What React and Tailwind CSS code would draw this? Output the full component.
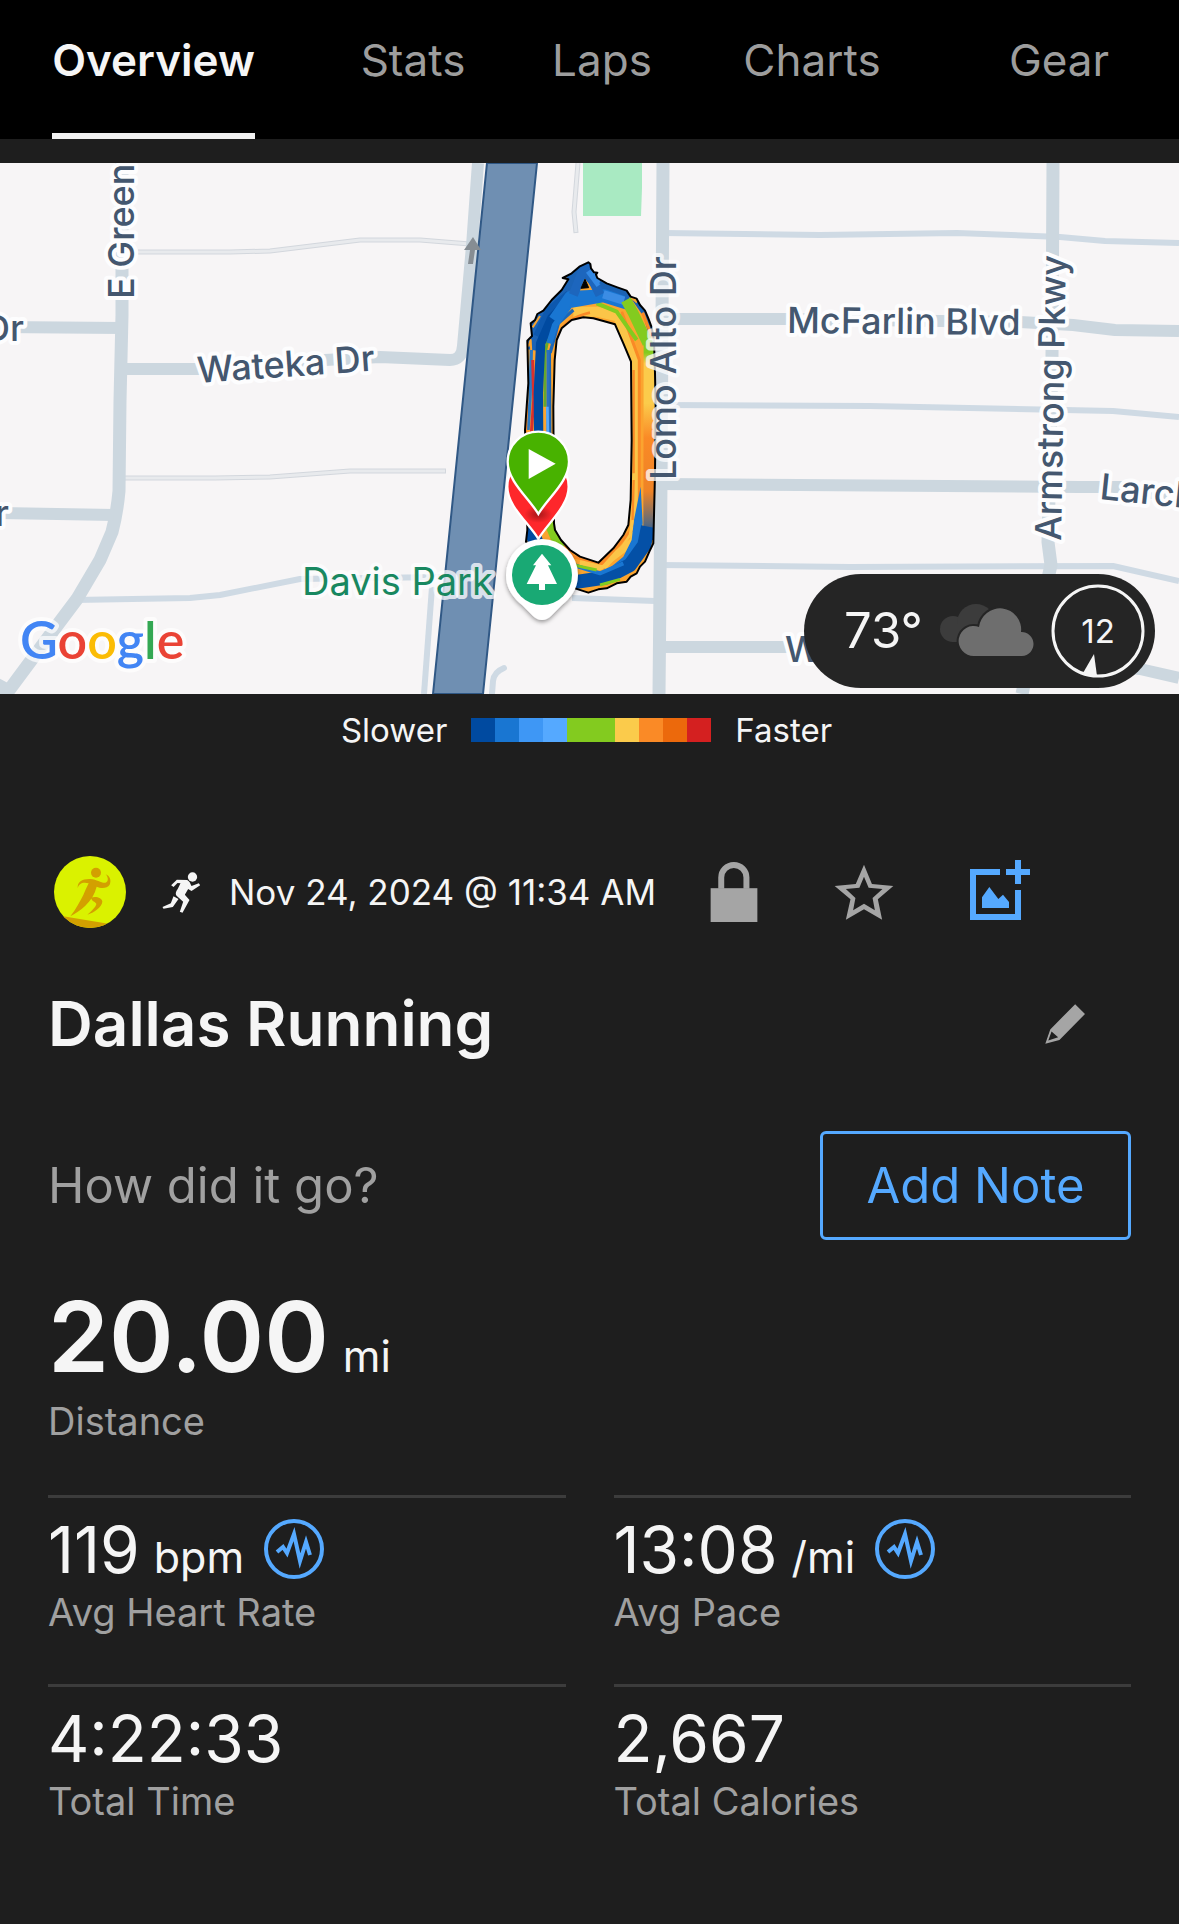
import React from "react";

const tabs = ["Overview", "Stats", "Laps", "Charts", "Gear"];

const paceColors = [
  "bg-[#004aa0]",
  "bg-[#1976d2]",
  "bg-[#3e97f5]",
  "bg-[#55a9ff]",
  "bg-[#83cb1f]",
  "bg-[#83cb1f]",
  "bg-[#fbcb4b]",
  "bg-[#fa8a26]",
  "bg-[#ec690c]",
  "bg-[#d42020]",
];

const stats = [
  { value: "119", unit: "bpm", label: "Avg Heart Rate", chart: true },
  { value: "13:08", unit: "/mi", label: "Avg Pace", chart: true },
  { value: "4:22:33", label: "Total Time" },
  { value: "2,667", label: "Total Calories" },
];

function Tabs() {
  return (
    <nav className="grid grid-cols-[307fr_212fr_166fr_254fr_240fr] bg-black">
      {tabs.map((tab, i) => (
        <button
          key={tab}
          type="button"
          className={
            i === 0
              ? "justify-self-center border-b-[6px] border-[#f2f2f2] pt-9 pb-12 text-[44px] leading-[49px] font-semibold text-[#f5f5f5]"
              : "justify-self-center border-b-[6px] border-transparent pt-9 pb-12 text-[44px] leading-[49px] text-[#9d9d9d]"
          }
        >
          {tab}
        </button>
      ))}
    </nav>
  );
}

function Roads() {
  return (
    <g fill="none" strokeLinejoin="round">
      <g stroke="#d3d7dd" strokeWidth="5">
        <path d="M138 89 L230 89 L270 88 L360 77 L420 77 L470 81" />
        <path d="M125 315 L215 315 L270 314 L350 308 L446 308" />
        <path d="M578 0 L574 49 L576 70" />
      </g>
      <g stroke="#e8eaed" strokeWidth="3">
        <path d="M138 89 L230 89 L270 88 L360 77 L420 77 L470 81" />
        <path d="M125 315 L215 315 L270 314 L350 308 L445 308" />
        <path d="M578 0 L574 49 L576 69" />
      </g>
      <g stroke="#cfdae4" strokeWidth="6">
        <path d="M75 437 L190 435 L220 432 L300 416 L440 414" />
        <path d="M432 424 L424 531" />
        <path d="M663 70 L820 72 L957 70 L1060 74 L1105 78 L1179 80" />
        <path d="M663 242 L870 243 L1113 248 L1179 254" />
        <path d="M659 402 L850 404 L1113 403 L1179 418" />
        <path d="M572 435 L655 438" />
        <path d="M504 505 Q494 509 493 518 L492 531" strokeLinecap="round" />
      </g>
      <g stroke="#ccd7df" strokeWidth="12">
        <path d="M122 0 L122 152 L120 238 L119 328 Q117 350 112 369 L100 397 L77 436 L47 476 L4 534" strokeWidth="13" />
        <path d="M-5 520 L12 529" />
        <path d="M0 164 L122 165" />
        <path d="M0 350 L114 352" />
        <path d="M122 206 L215 206 L325 197 L380 194 L450 197 Q462 197 463 183 L472 83 L478 0" />
        <path d="M663 0 L661 320 L659 531" strokeWidth="13" />
        <path d="M663 156 L785 156 L1020 159 L1073 162 L1115 167 L1179 168" />
        <path d="M661 321 L1080 324 L1125 324 L1179 336" />
        <path d="M659 484 L930 484 L1140 506 L1179 515" />
        <path d="M1053 0 L1052 193 L1048 379 L1051 402 L1022 531" strokeWidth="13" />
      </g>
      <path d="M487 0 H537 L483 531 H433 Z" fill="#6f8fb2" stroke="#305885" strokeWidth="2" />
      <path d="M473 74 L481 87 L475 87 L473 101 H468 L470 87 L464 87 Z" fill="#868d93" />
      <path d="M583 0 H642 V25 L641 53 H583 Z" fill="#a9eac2" />
    </g>
  );
}

const outer =
  "M295 67 L301 72 L303 85 L312 97 L322 98 L318 104 L322 114 L350 130 L382 142 L410 152 L422 170 L440 176 L450 195 L465 212 L475 235 L485 262 L492 300 L495 400 L497 500 L495 700 L490 910 L478 935 L465 965 L450 980 L440 1000 L422 1010 L410 1025 L380 1030 L350 1045 L325 1048 L295 1058 L255 1045 L205 1000 L150 940 L108 905 L112 870 L110 700 L105 570 L110 500 L115 430 L112 302 L126 288 L122 250 L135 240 L142 222 L160 212 L185 180 L215 150 L235 118 L218 114 L245 100 L268 80 Z";
const inner =
  "M310 235 L280 232 L245 240 L215 265 L200 300 L194 360 L190 500 L192 850 L195 870 L213 900 L240 930 L270 950 L325 968 L370 925 L400 885 L415 855 L422 780 L425 600 L423 365 L400 310 L375 253 L340 243 Z";

function Track() {
  return (
    <g transform="translate(490 77) scale(.33333)">
      <defs>
        <clipPath id="ring">
          <path d={`${outer} ${inner}`} clipRule="evenodd" />
        </clipPath>
        <linearGradient id="rightLane" x1="0" y1="130" x2="0" y2="930" gradientUnits="userSpaceOnUse">
          <stop offset="0" stopColor="#83cb1f" />
          <stop offset=".26" stopColor="#83cb1f" />
          <stop offset=".3" stopColor="#fbcb4b" />
          <stop offset=".45" stopColor="#fbcb4b" />
          <stop offset=".58" stopColor="#fa8a26" />
          <stop offset=".78" stopColor="#ee8326" />
          <stop offset=".9" stopColor="#5d6a7c" />
          <stop offset=".97" stopColor="#004aa0" />
        </linearGradient>
        <radialGradient id="pinShade">
          <stop offset="0" stopColor="#8f1414" stopOpacity=".8" />
          <stop offset="1" stopColor="#8f1414" stopOpacity="0" />
        </radialGradient>
        <filter id="soft" x="-30%" y="-30%" width="160%" height="160%">
          <feDropShadow dx="0" dy="6" stdDeviation="7" floodOpacity=".4" />
        </filter>
      </defs>
      <path d={`${outer} ${inner}`} fill="#fba42f" fillRule="evenodd" />
      <g clipPath="url(#ring)" fill="none" strokeLinejoin="round">
        <path d="M125 330 L135 260 L190 190 L245 130 L285 80 L325 130 L420 170" stroke="#1b63b6" strokeWidth="46" />
        <path d="M115 320 L122 300 L128 420" stroke="#fba42f" strokeWidth="6" />
        <path d="M128 262 L150 228" stroke="#fba42f" strokeWidth="6" />
        <path d="M436 900 V370 L385 230 L320 215 L250 215" stroke="#fbc548" strokeWidth="30" />
        <path d="M448 880 V360 L395 215" stroke="#fa8a26" strokeWidth="9" />
        <path d="M431 700 V390 M431 720 L427 860" stroke="#fa8a26" strokeWidth="7" />
        <path d="M435 900 L330 980 L270 965" stroke="#fbc548" strokeWidth="22" />
        <path d="M425 870 L335 970 L250 950 L200 880" stroke="#fa8a26" strokeWidth="10" />
        <path d="M440 300 L380 215 L320 190" stroke="#83cb1f" strokeWidth="12" />
        <path d="M200 290 Q225 235 300 218" stroke="#fa8a26" strokeWidth="8" />
        <path d="M124 330 L120 480 L114 570" stroke="#2b79c4" strokeWidth="10" />
        <path d="M128 360 L131 480 L124 580" stroke="#d9302c" strokeWidth="9" />
        <path d="M112 480 L108 580" stroke="#fa8a26" strokeWidth="6" />
        <path d="M180 600 V340 L205 250 L250 210" stroke="#1b67b8" strokeWidth="10" />
        <path d="M165 500 V340 L180 270" stroke="#64a92c" strokeWidth="9" />
        <path d="M174 600 V330" stroke="#2a70c0" strokeWidth="9" />
        <path d="M188 580 L186 340" stroke="#fba42f" strokeWidth="6" />
        <path d="M174 600 L172 500" stroke="#55a9ff" strokeWidth="8" />
        <path d="M240 165 L180 215 L145 290" stroke="#0d58ae" strokeWidth="32" />
        <path d="M146 600 L145 460 L152 310 L185 235 L240 178" stroke="#004aa0" strokeWidth="28" />
        <path d="M178 310 L195 255 L240 195 L340 178 L410 200" stroke="#1976d2" strokeWidth="18" />
        <path d="M192 240 L240 170 L345 165 L400 185" stroke="#1976d2" strokeWidth="34" />
        <path d="M250 165 L285 75 L330 165" stroke="#1d66bd" strokeWidth="28" />
        <path d="M296 92 L328 135" stroke="#3489e4" strokeWidth="20" />
        <path d="M340 163 L402 182" stroke="#3b8ce4" strokeWidth="25" />
        <path d="M330 125 L420 160 L465 225 L485 290" stroke="#1c63b2" strokeWidth="12" />
        <path d="M425 172 L442 186" stroke="#fba42f" strokeWidth="9" />
        <path d="M458 218 L490 300" stroke="#fa8a26" strokeWidth="9" />
        <path d="M408 180 L430 220 L473 310" stroke="#83cb1f" strokeWidth="32" />
        <path d="M478 300 L477 900" stroke="url(#rightLane)" strokeWidth="34" />
        <path d="M452 740 L432 840 L425 900 L400 950 L340 1000 L440 960 L458 850 Z" fill="#1976d2" />
        <path d="M428 840 L420 885 L380 945 L345 985" stroke="#fbc548" strokeWidth="8" />
        <path d="M474 860 L463 915 L420 975 L350 1012 L230 1030" stroke="#0450a6" strokeWidth="42" />
        <path d="M400 970 L330 1000 L250 975" stroke="#1976d2" strokeWidth="12" />
        <path d="M250 975 L320 990" stroke="#83cb1f" strokeWidth="9" />
        <path d="M330 1035 L390 1018" stroke="#83cb1f" strokeWidth="9" />
        <path d="M120 860 L150 940" stroke="#004aa0" strokeWidth="45" />
        <path d="M178 850 L210 925" stroke="#83cb1f" strokeWidth="30" />
      </g>
      <g fill="none" stroke="#000" strokeWidth="6" strokeLinejoin="round">
        <path d={outer} />
        <path d={inner} />
      </g>
      <path d="M285 118 L296 143 L273 145 Z" fill="#000" stroke="#000" strokeWidth="3" />

      {/* finish and start pins */}
      <path
        d="M145 897 C118 850 52 800 52 740 A92 92 0 0 1 236 740 C236 800 172 850 145 897 Z"
        fill="#fe272b"
        stroke="#fff"
        strokeWidth="7"
      />
      <ellipse cx="145" cy="823" rx="42" ry="26" fill="url(#pinShade)" />
      <path
        d="M145 822 C118 775 53 725 53 665 A92 90 0 0 1 237 665 C237 725 172 775 145 822 Z"
        fill="#48b200"
        stroke="#fff"
        strokeWidth="7"
      />
      <path d="M116 627 L197 671 L116 717 Z" fill="#fff" />

      {/* park marker */}
      <path
        d="M156 897 A108 108 0 0 1 264 1005 C264 1050 238 1076 215 1096 L183 1128 Q156 1152 129 1128 L97 1096 C74 1076 48 1050 48 1005 A108 108 0 0 1 156 897 Z"
        fill="#fff"
        filter="url(#soft)"
      />
      <circle cx="156" cy="1005" r="90" fill="#19a974" />
      <path d="M156 941 L184 976 H174 L201 1032 H165 V1050 H147 V1032 H110 L138 976 H129 Z" fill="#fff" />
    </g>
  );
}

function MapView() {
  return (
    <svg viewBox="0 0 1179 531" className="block w-full bg-[#f7f5f6]" role="img" aria-label="Route map">
      <Roads />
      <Track />
      <g
        fill="#44576f"
        stroke="#fdfdfe"
        strokeWidth="8"
        strokeLinejoin="round"
        paintOrder="stroke"
        fontSize="36"
        fontWeight="500"
      >
        <text x="-16" y="178">Dr</text>
        <text x="-5" y="363">r</text>
        <text transform="translate(134 136) rotate(-90)">E Green</text>
        <text transform="translate(198 220) rotate(-4)">Wateka Dr</text>
        <text transform="translate(787 170) rotate(.5)">McFarlin Blvd</text>
        <text transform="translate(1061 378) rotate(-89)">Armstrong Pkwy</text>
        <text transform="translate(676 317) rotate(-90)" strokeOpacity=".75">Lomo Alto Dr</text>
        <text transform="translate(1099 336) rotate(6)">Larch</text>
        <text x="785" y="499">W</text>
        <text x="302" y="432" fill="#188860" strokeOpacity=".75" fontWeight="400" fontSize="38">
          Davis Park
        </text>
      </g>
      <text
        x="20"
        y="496"
        fontSize="52"
        fontWeight="600"
        fontFamily="Lato, sans-serif"
        stroke="#fff"
        strokeOpacity=".7"
        strokeWidth="8"
        strokeLinejoin="round"
        paintOrder="stroke"
      >
        <tspan fill="#4285f4">G</tspan>
        <tspan fill="#ea4335">o</tspan>
        <tspan fill="#fbbc05">o</tspan>
        <tspan fill="#4285f4">g</tspan>
        <tspan fill="#34a853">l</tspan>
        <tspan fill="#ea4335">e</tspan>
      </text>
    </svg>
  );
}

function Weather() {
  return (
    <div className="absolute right-6 bottom-1.5 flex h-[114px] w-[351px] items-center justify-between rounded-full bg-[#252525] pr-2.5 pl-10 text-[#f5f5f5]">
      <span className="text-[49px] leading-[60px]">73°</span>
      <svg viewBox="0 0 94 54" className="h-[54px] w-[94px]" aria-label="Cloudy">
        <g fill="#3c3c3c">
          <circle cx="13" cy="25" r="13" />
          <circle cx="36" cy="19" r="19" />
          <rect x="12" y="20" width="40" height="18" />
        </g>
        <g fill="#6e6e6e" stroke="#252525" strokeWidth="4" paintOrder="stroke">
          <path d="M34 52 A15 15 0 1 1 39 23 A21 21 0 0 1 81 28 A12 12 0 0 1 82 52 Z" />
        </g>
      </svg>
      <div className="relative flex size-[94px] items-center justify-center">
        <svg viewBox="0 0 94 94" className="absolute inset-0 size-full" aria-hidden="true">
          <circle cx="47" cy="47" r="45" fill="none" stroke="#f5f5f5" strokeWidth="3" />
          <path d="M43 70 L46 92 L32 89 Z" fill="#f5f5f5" />
        </svg>
        <span className="text-[33px] leading-9">12</span>
      </div>
    </div>
  );
}

function Legend() {
  return (
    <div className="flex items-center justify-center gap-6 pt-[18px] pr-1.5 text-[33px] leading-9 text-[#f5f5f5]">
      <span>Slower</span>
      <div className="flex">
        {paceColors.map((c, i) => (
          <span key={i} className={`size-6 ${c}`} />
        ))}
      </div>
      <span>Faster</span>
    </div>
  );
}

function Avatar() {
  return (
    <svg viewBox="27 27 216 216" className="size-[72px] shrink-0" role="img" aria-label="Profile picture">
      <defs>
        <clipPath id="avatarClip">
          <circle cx="135" cy="135" r="108" />
        </clipPath>
      </defs>
      <g clipPath="url(#avatarClip)">
        <rect x="27" y="27" width="216" height="216" fill="#daf200" />
        <g fill="#d3a000">
          <path d="M50 207 L190 230 L150 250 H60 Z" />
          <circle cx="153" cy="77" r="15" />
          <path d="M98 124 C97 103 112 95 137 96 C158 98 174 112 184 106 C192 100 188 88 182 82 C194 86 200 100 194 113 C186 126 166 124 155 119 C149 142 138 160 121 176 C107 190 90 200 76 208 C93 186 104 165 115 144 C120 132 125 121 131 109 C115 104 101 109 98 124 Z" />
          <path d="M138 152 C152 146 172 153 172 164 C171 180 146 197 127 203 C141 191 153 179 154 171 C153 164 140 164 138 152 Z" />
        </g>
      </g>
    </svg>
  );
}

function Runner() {
  return (
    <svg viewBox="350 73 116 123" className="h-[41px] w-[39px] shrink-0" fill="#f5f5f5" role="img" aria-label="Running">
      <circle cx="441" cy="88" r="14" />
      <path d="M394 96 L425 97 C433 101 434 108 438 115 L460 107 L464 113 L438 130 L428 124 L418 141 L432 157 L411 195 L403 192 L413 162 L394 145 C388 138 392 130 397 123 L405 107 L396 106 L384 118 L377 113 Z" />
      <path d="M384 146 L399 154 L382 178 L354 183 L351 178 L376 167 Z" />
    </svg>
  );
}

function ActivityHeader() {
  return (
    <div className="flex h-[72px] items-center pr-[101px] pl-1.5">
      <Avatar />
      <span className="ml-9">
        <Runner />
      </span>
      <span className="ml-7 text-[35px] leading-10 whitespace-nowrap text-[#f5f5f5]">Nov 24, 2024 @ 11:34 AM</span>
      <div className="ml-[54px] flex flex-1 items-center justify-between">
        <button type="button" aria-label="Privacy">
          <svg viewBox="58 65 143 181" className="h-[60px] w-[48px]">
            <rect x="59" y="144" width="141" height="102" fill="#a5a5a5" />
            <path d="M91 146 V112 A38 38 0 0 1 167 112 V146" fill="none" stroke="#a5a5a5" strokeWidth="18" />
          </svg>
        </button>
        <button type="button" aria-label="Favorite">
          <svg viewBox="434 72 182 171" className="h-[57px] w-[60px]">
            <path
              d="M525 73 L549 132 L614 138 L567 178 L580 240 L525 208 L470 240 L484 178 L436 138 L500 132 Z M525 110 L511 143 L470 147 L499 174 L492 211 L525 192 L558 211 L551 174 L581 147 L539 143 Z"
              fill="#a5a5a5"
              fillRule="evenodd"
            />
          </svg>
        </button>
        <button type="button" aria-label="Add photo" className="pb-1">
          <svg viewBox="840 57 180 180" className="size-[60px]" fill="#55a9ff">
            <path d="M840 84 H930 V102 H858 V219 H975 V147 H993 V237 H840 Z" />
            <path d="M975 57 H993 V84 H1020 V102 H993 V129 H975 V102 H948 V84 H975 Z" />
            <path d="M876 169 L898 138 L925 174 L939 161 L957 183 V201 H876 Z" />
          </svg>
        </button>
      </div>
    </div>
  );
}

function ChartBadge() {
  return (
    <button type="button" aria-label="Show chart" className="mt-2 ml-5 size-[60px]">
      <svg viewBox="0 0 60 60" className="size-full" fill="none" stroke="#55a9ff">
        <circle cx="30" cy="30" r="28" strokeWidth="4" />
        <path d="M13 33 L19 28 L23 34 L30 15 L36 42 L42 23 L46 36" strokeWidth="4" />
      </svg>
    </button>
  );
}

function Stat({ value, unit, label, chart }) {
  return (
    <div className="h-[189px] border-t-[3px] border-[#3c3c3c] pt-[13px]">
      <div className="flex h-[74px] items-start">
        <p className="text-[64px] leading-[78px] text-[#f5f5f5]">
          {value}
          {unit && <span className="ml-3.5 text-[43px] leading-none">{unit}</span>}
        </p>
        {chart && <ChartBadge />}
      </div>
      <p className="mt-1 text-[38px] leading-[46px] text-[#a0a0a0]">{label}</p>
    </div>
  );
}

export default function App() {
  return (
    <div className="min-h-screen bg-[#1e1e1e] font-['Inter',sans-serif]">
      <Tabs />
      <div className="relative mt-6">
        <MapView />
        <Weather />
      </div>
      <Legend />
      <main className="px-12 pt-[108px]">
        <ActivityHeader />
        <div className="mt-14 flex items-center justify-between pr-[46px]">
          <h1 className="text-[62px] leading-[80px] font-semibold text-[#f5f5f5]">Dallas Running</h1>
          <button type="button" aria-label="Edit name">
            <svg viewBox="1064 491 122 121" className="size-10">
              <path
                d="M1156 491 L1186 521 L1108 600 L1065 612 L1080 568 Z M1084 574 L1074 602 L1104 592 Z"
                fill="#a5a5a5"
                fillRule="evenodd"
              />
            </svg>
          </button>
        </div>
        <div className="mt-[67px] flex items-center justify-between">
          <p className="text-[49px] leading-[60px] text-[#a0a0a0]">How did it go?</p>
          <button
            type="button"
            className="h-[109px] w-[311px] rounded-md border-[3px] border-[#55a9ff] text-[49px] leading-[60px] text-[#55a9ff]"
          >
            Add Note
          </button>
        </div>
        <p className="mt-9 text-[98px] leading-[122px] font-semibold text-[#f5f5f5]">
          20.00<span className="ml-3.5 text-[43px] leading-none font-normal">mi</span>
        </p>
        <p className="text-[38px] leading-[46px] text-[#a0a0a0]">Distance</p>
        <div className="mt-[51px] grid grid-cols-2 gap-x-12">
          {stats.map((s) => (
            <Stat key={s.label} {...s} />
          ))}
        </div>
      </main>
    </div>
  );
}
